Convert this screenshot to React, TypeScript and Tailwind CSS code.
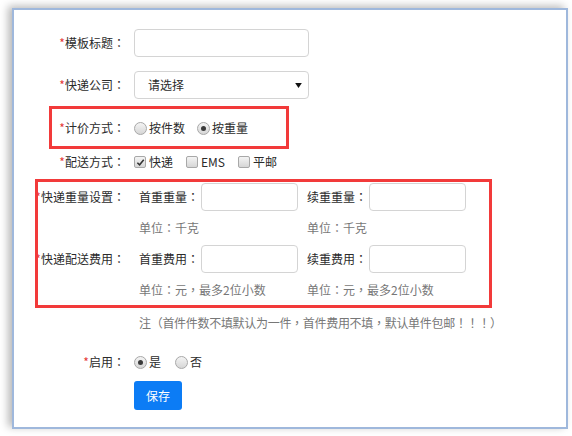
import type { ReactNode } from "react";

const FONT = {
  fontFamily: '"Microsoft YaHei", "Noto Sans CJK SC", "Liberation Sans", sans-serif',
};

function P({ children }: { children: string }) {
  return <span style={{ fontFamily: '"Noto Sans CJK TC", sans-serif' }}>{children}</span>;
}

function Label({ children }: { children: ReactNode }) {
  return (
    <div className="w-[111px] shrink-0 whitespace-nowrap text-right text-[12px] leading-[20px] text-[#2b2b2b]">
      <span className="text-[#e53935]">*</span>
      {children}
      <P>：</P>
    </div>
  );
}

function TextBox({ className = "" }: { className?: string }) {
  return (
    <div
      className={`h-[28px] rounded-[4px] border border-[#d4d4d4] bg-white ${className}`}
    />
  );
}

function Radio({ checked, label }: { checked?: boolean; label: string }) {
  return (
    <div className="flex items-center">
      <span className="flex h-[13px] w-[13px] items-center justify-center rounded-full border border-[#a8a8a8] bg-gradient-to-b from-[#f4f4f4] to-[#d6d6d6]">
        {checked && <span className="h-[5px] w-[5px] rounded-full bg-[#3a3a3a]" />}
      </span>
      <span className="ml-[2px] text-[12px] leading-[20px] text-[#2b2b2b]">{label}</span>
    </div>
  );
}

function Check({ checked, label }: { checked?: boolean; label: string }) {
  return (
    <div className="flex items-center">
      <span className="flex h-[12px] w-[12px] items-center justify-center rounded-[2px] border border-[#a8a8a8] bg-gradient-to-b from-[#f4f4f4] to-[#d6d6d6]">
        {checked && (
          <svg viewBox="0 0 10 10" className="h-[9px] w-[9px]">
            <path d="M1.5 5.2 L4 7.6 L8.6 2" fill="none" stroke="#333" strokeWidth="1.7" />
          </svg>
        )}
      </span>
      <span className="ml-[3px] text-[12px] leading-[20px] text-[#2b2b2b]">{label}</span>
    </div>
  );
}

function SubField({ label, unit }: { label: string; unit: ReactNode }) {
  return (
    <div className="flex w-[159px] flex-col">
      <div className="flex items-center">
        <span className="w-[60px] shrink-0 whitespace-nowrap text-[12px] leading-[20px] text-[#2b2b2b]">
          {label}
          <P>：</P>
        </span>
        <TextBox className="ml-[2px] w-[97px]" />
      </div>
      <div className="mt-[9px] whitespace-nowrap text-[12px] leading-[16px] text-[#777]">{unit}</div>
    </div>
  );
}

const KG = (
  <>
    单位<P>：</P>千克
  </>
);
const YUAN = (
  <>
    单位<P>：</P>元<P>，</P>最多2位小数
  </>
);

export default function App() {
  return (
    <div className="h-[436px] w-[572px] bg-white pl-[12px] pt-[8px]" style={FONT}>
      <div className="relative h-[421px] w-[556px] border-2 border-[#9fb8dc] bg-white shadow-[-4px_-2px_8px_rgba(0,0,0,0.28)]">
        <div className="flex flex-col pt-[19px]">
          <div className="flex items-center">
            <Label>模板标题</Label>
            <TextBox className="ml-[9px] w-[175px]" />
          </div>

          <div className="mt-[14px] flex items-center">
            <Label>快递公司</Label>
            <div className="ml-[9px] flex h-[28px] w-[175px] items-center justify-between rounded-[4px] border border-[#d4d4d4] bg-white pl-[13px] pr-[6px]">
              <span className="text-[12px] text-[#2b2b2b]">请选择</span>
              <svg viewBox="0 0 8 6" className="h-[5px] w-[7px]">
                <path d="M0 0 H8 L4 6 Z" fill="#111" />
              </svg>
            </div>
          </div>

          <div className="mt-[19px] flex items-center">
            <Label>计价方式</Label>
            <div className="ml-[9px] flex items-center gap-[12px]">
              <Radio label="按件数" />
              <Radio checked label="按重量" />
            </div>
          </div>

          <div className="mt-[14px] flex items-center">
            <Label>配送方式</Label>
            <div className="ml-[9px] flex items-center gap-[13px]">
              <Check checked label="快递" />
              <Check label="EMS" />
              <Check label="平邮" />
            </div>
          </div>

          <div className="mt-[11px] flex items-start">
            <div className="flex h-[28px] items-center">
              <Label>快递重量设置</Label>
            </div>
            <div className="ml-[14px] flex gap-[9px]">
              <SubField label="首重重量" unit={KG} />
              <SubField label="续重重量" unit={KG} />
            </div>
          </div>

          <div className="mt-[9px] flex items-start">
            <div className="flex h-[28px] items-center">
              <Label>快递配送费用</Label>
            </div>
            <div className="ml-[14px] flex gap-[9px]">
              <SubField label="首重费用" unit={YUAN} />
              <SubField label="续重费用" unit={YUAN} />
            </div>
          </div>

          <div className="ml-[125px] mt-[17px] whitespace-nowrap text-[12px] leading-[16px] tracking-[-0.3px] text-[#777]">
            注<P>（</P>首件件数不填默认为一件<P>，</P>首件费用不填<P>，</P>默认单件包邮<P>！！！）</P>
          </div>

          <div className="mt-[21px] flex items-center">
            <Label>启用</Label>
            <div className="ml-[9px] flex items-center gap-[14px]">
              <Radio checked label="是" />
              <Radio label="否" />
            </div>
          </div>

          <div className="ml-[120px] mt-[9px]">
            <button className="h-[29px] w-[48px] rounded-[3px] bg-[#0c7cf5] text-[12px] text-white">
              保存
            </button>
          </div>
        </div>

        {/* red annotation frames */}
        <div className="pointer-events-none absolute left-[35px] top-[96px] h-[43px] w-[240px] border-[3px] border-[#f23a3a]" />
        <div className="pointer-events-none absolute left-[21px] top-[169px] h-[129px] w-[457px] border-[3px] border-[#f23a3a]" />
      </div>
    </div>
  );
}
